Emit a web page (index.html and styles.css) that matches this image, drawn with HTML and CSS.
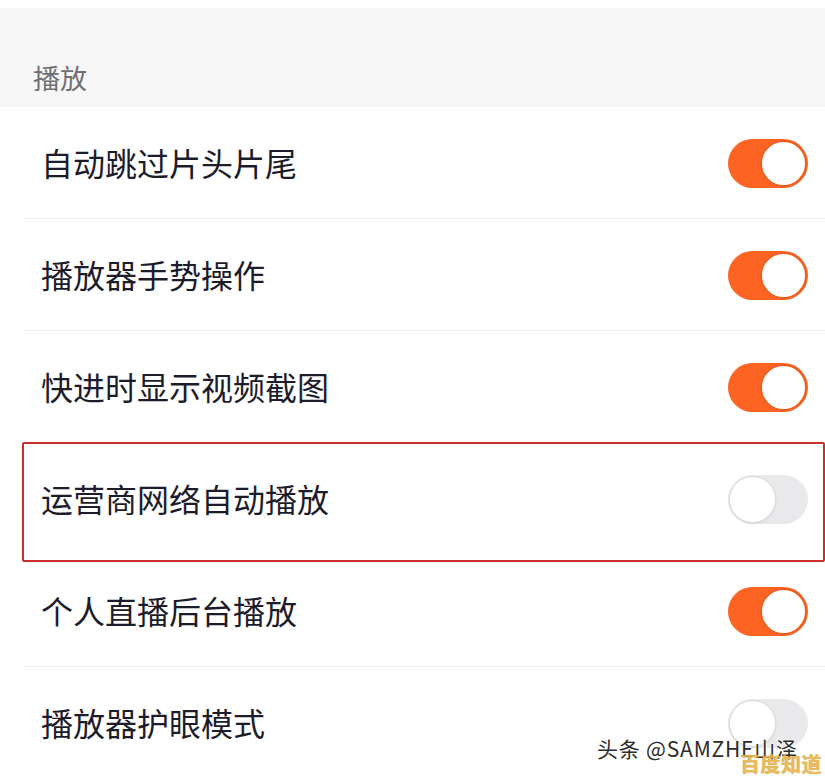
FILE: index.html
```html
<!DOCTYPE html>
<html lang="zh-CN">
<head>
<meta charset="utf-8">
<link rel="stylesheet" href="styles.css">
</head>
<body>
<div class="page">
  <div class="top-gap"></div>
  <div class="section-head"><span>播放</span></div>
  <div class="list">
    <div class="row"><span class="label">自动跳过片头片尾</span><span class="switch on"><span class="knob"></span></span></div>
    <div class="row"><span class="label">播放器手势操作</span><span class="switch on"><span class="knob"></span></span></div>
    <div class="row"><span class="label">快进时显示视频截图</span><span class="switch on"><span class="knob"></span></span></div>
    <div class="row highlighted"><span class="label">运营商网络自动播放</span><span class="switch off"><span class="knob"></span></span></div>
    <div class="row"><span class="label">个人直播后台播放</span><span class="switch on"><span class="knob"></span></span></div>
    <div class="row last"><span class="label">播放器护眼模式</span><span class="switch off"><span class="knob"></span></span></div>
  </div>
  <div class="watermark">头条 @SAMZHE山泽</div>
  <div class="watermark2">百度知道</div>
</div>
</body>
</html>
```
FILE: styles.css
```css
* { box-sizing: border-box; }
html, body { margin: 0; padding: 0; background: #fff; }
body { font-family: "Noto Sans CJK SC", "Noto Sans", sans-serif; }
.page { position: relative; width: 825px; height: 778px; overflow: hidden; background: #fff; }
.top-gap { height: 8px; background: #fff; }
.section-head {
  height: 99px;
  background: #f7f7f7;
  display: flex;
  align-items: flex-end;
  padding: 0 0 14px 33px;
}
.section-head span { font-size: 27px; color: #6f6f74; line-height: 30px; }
.list { display: flex; flex-direction: column; }
.row {
  position: relative;
  height: 112px;
  display: flex;
  align-items: center;
  justify-content: space-between;
  padding: 0 17px 0 41px;
}
.row::after {
  content: "";
  position: absolute;
  left: 24px; right: 0; bottom: 0;
  height: 1px;
  background: #efefef;
}
.row.last::after, .highlighted::after { display: none; }
.label { font-size: 32px; color: #1d1c2b; line-height: 40px; margin-top: -2px; }
.switch {
  position: relative;
  width: 80px; height: 49px;
  border-radius: 25px;
  display: block;
}
.switch.on { background: #fd6424; }
.switch.off { background: #e9e9eb; }
.knob {
  position: absolute;
  top: 1px;
  width: 47px; height: 47px;
  border-radius: 50%;
  background: #fff;
}
.switch.on .knob { right: 1px; border: 2px solid #ef5f22; }
.switch.off .knob { left: 1px; border: 1.5px solid #dcdcdc; box-shadow: 0 1px 2px rgba(0,0,0,0.08); }
.highlighted::before {
  content: "";
  position: absolute;
  left: 22px; top: -1px;
  width: 799px; height: 116px;
  border: 2.5px solid #cc2e2e;
  border-radius: 2px;
  z-index: 2;
}
.watermark {
  position: absolute;
  left: 597px; top: 733px;
  font-family: "Noto Sans CJK SC", "Liberation Sans", sans-serif;
  font-size: 21px;
  color: #2c2c2c;
  letter-spacing: 0.8px;
  text-shadow: 0 0 2px #fff, 0 0 2px #fff;
  z-index: 3;
}
.watermark2 {
  position: absolute;
  left: 740px; top: 749px;
  font-size: 20px;
  font-weight: 700;
  color: #e8b44a;
  opacity: 0.9;
  letter-spacing: 0.5px;
  text-shadow: 0 0 1px #b88a2a;
  z-index: 4;
}
```
